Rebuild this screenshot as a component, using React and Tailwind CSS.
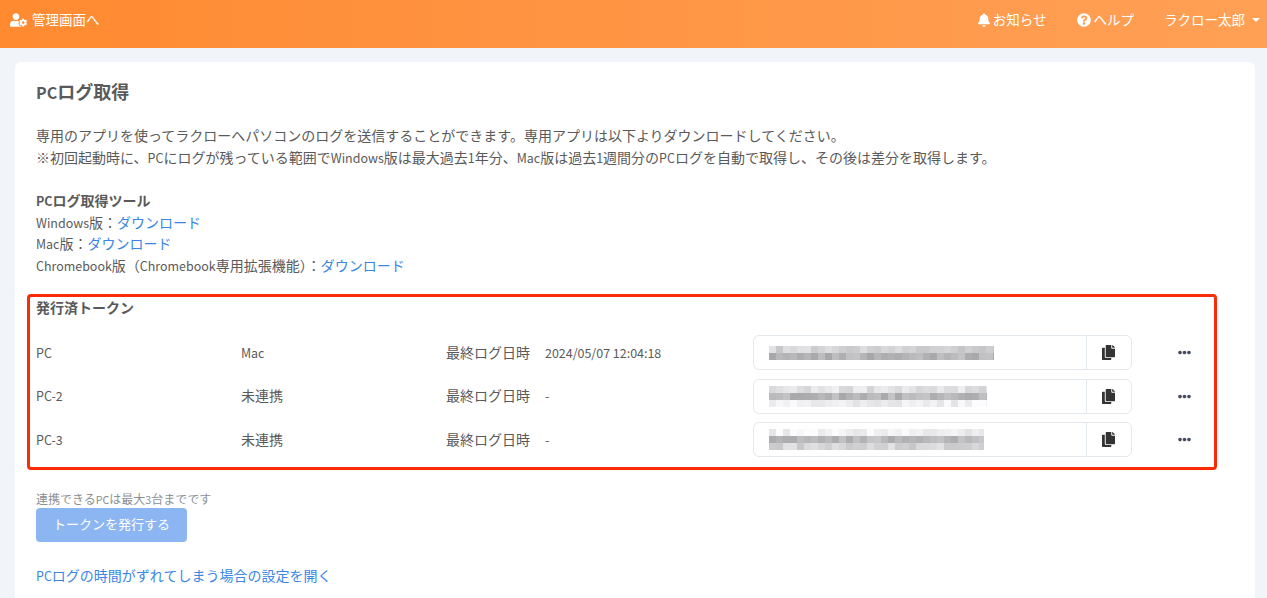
import { FaUserCog, FaBell, FaQuestionCircle, FaCopy, FaEllipsisH } from 'react-icons/fa';

const tokens = [
  { name: 'PC', os: 'Mac', last: '2024/05/07 12:04:18', seed: 3, width: 225, bands: [212, 182] },
  { name: 'PC-2', os: '未連携', last: '-', seed: 11, width: 218, bands: [226, 182, 242] },
  { name: 'PC-3', os: '未連携', last: '-', seed: 23, width: 215, bands: [242, 186, 214] },
];

// latin runs are a bit smaller than the japanese around them
function T({ children }) {
  return children.split(/([A-Za-z0-9\-/: ]+)/).map((part, i) =>
    i % 2 ? (
      <span key={i} className="text-[0.89em] leading-none">{part}</span>
    ) : (
      part
    )
  );
}

// mosaic that stands in for the blurred token value
function Mosaic({ seed, width, bands }) {
  const cells = [];
  let v = seed;
  bands.forEach((base, row) => {
    for (let x = 0; x < width; x += 7) {
      v = (v * 73 + 41) % 101;
      const g = Math.min(252, base + (v % 30) - 15);
      cells.push(
        <rect key={row + '-' + x} x={x} y={row * 7} width="7" height="7" fill={`rgb(${g},${g},${g + 2})`} />
      );
    }
  });
  return (
    <svg width={width} height={bands.length * 7} className="block">
      {cells}
    </svg>
  );
}

function TokenRow({ token }) {
  return (
    <div className="flex items-center h-[43.5px]">
      <div className="w-[205px] shrink-0 pb-[2px]"><T>{token.name}</T></div>
      <div className="w-[205px] shrink-0 pb-[2px]"><T>{token.os}</T></div>
      <div className="w-[99px] shrink-0 pb-[2px]">最終ログ日時</div>
      <div className="w-[208px] shrink-0 pb-[2px]"><T>{token.last}</T></div>
      <div className="flex h-[35px] w-[379px] shrink-0">
        <div className="flex-1 flex items-center pl-[15px] border border-[#e4e9ee] rounded-l-md">
          <Mosaic seed={token.seed} width={token.width} bands={token.bands} />
        </div>
        <div className="w-[46px] -ml-px pr-[2px] flex items-center justify-center border border-[#e4e9ee] rounded-r-md text-[#333]">
          <FaCopy className="w-[13px] h-[15px]" />
        </div>
      </div>
      <div className="w-[98px] shrink-0 pl-[46px] text-[#444b5c]">
        <FaEllipsisH className="w-[13px] h-[13px]" />
      </div>
    </div>
  );
}

export default function App() {
  return (
    <div
      className="h-[598px] overflow-hidden bg-[#f1f4f8] text-sm text-[#5a5a5a]"
      style={{ fontFamily: '"Noto Sans CJK JP", sans-serif' }}
    >
      <header className="h-12 flex items-center justify-between pl-[10px] pr-[7px] pb-[9px] text-white text-[13.5px] bg-gradient-to-r from-[#ff8a30] to-[#ffa055]">
        <div className="flex items-center gap-[5px]">
          <FaUserCog className="w-[17px] h-[14px]" />
          <span>管理画面へ</span>
        </div>
        <div className="flex items-center">
          <div className="flex items-center gap-[3px] mr-[30px]">
            <FaBell className="w-[12px] h-[14px]" />
            <span>お知らせ</span>
          </div>
          <div className="flex items-center gap-[3px] mr-[30px]">
            <FaQuestionCircle className="w-[14px] h-[14px]" />
            <span>ヘルプ</span>
          </div>
          <div className="flex items-center gap-[7px]">
            <span>ラクロー太郎</span>
            <span className="w-0 h-0 border-x-[4px] border-x-transparent border-t-[4px] border-t-white" />
          </div>
        </div>
      </header>

      <main className="relative mt-[14px] ml-[15px] mr-[12px] bg-white rounded-md pt-[17px] px-[21px] h-[600px]">
        <h1 className="text-lg font-bold leading-[24px] mb-[21px]"><T>PCログ取得</T></h1>
        <p className="leading-[22px]">
          専用のアプリを使ってラクローへパソコンのログを送信することができます。専用アプリは以下よりダウンロードしてください。
          <br />
          <T>※初回起動時に、PCにログが残っている範囲でWindows版は最大過去1年分、Mac版は過去1週間分のPCログを自動で取得し、その後は差分を取得します。</T>
        </p>

        <section className="mt-[22px] leading-[21.5px]">
          <h2 className="font-bold"><T>PCログ取得ツール</T></h2>
          <div><T>Windows版：</T><a className="text-[#3b86e3]">ダウンロード</a></div>
          <div><T>Mac版：</T><a className="text-[#3b86e3]">ダウンロード</a></div>
          <div><T>Chromebook版（Chromebook専用拡張機能）：</T><a className="text-[#3b86e3]">ダウンロード</a></div>
        </section>

        <section className="mt-[21px]">
          <h2 className="font-bold leading-[21px] mb-[13px]">発行済トークン</h2>
          {tokens.map((token) => (
            <TokenRow key={token.name} token={token} />
          ))}
        </section>

        <p className="mt-[28px] text-xs leading-[18px] text-[#8a8f94]"><T>連携できるPCは最大3台までです</T></p>
        <button className="block w-[151px] h-[34px] rounded bg-[#8cb6f2] text-white text-[13px]">
          トークンを発行する
        </button>
        <a className="block mt-[22px] text-[#3b86e3] leading-[22px]"><T>PCログの時間がずれてしまう場合の設定を開く</T></a>

        {/* red annotation box drawn over the screenshot */}
        <div className="absolute left-[12px] top-[232px] w-[1190px] h-[176px] border-[3px] border-[#fc2a05] rounded-sm pointer-events-none" />
      </main>
    </div>
  );
}
